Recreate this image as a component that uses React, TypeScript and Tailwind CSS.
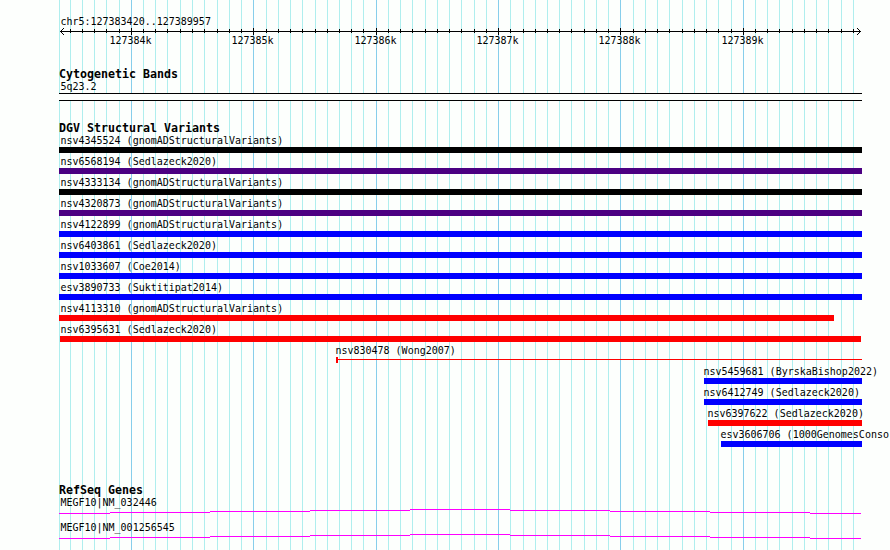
const MAJOR = [131, 253, 376, 498, 620, 743];
const MINOR = [
  59, 70, 82, 94, 106, 119, 143, 155, 167, 180, 192, 204, 217, 229, 241, 266, 278, 290, 302, 315, 327, 339, 351, 363,
  388, 400, 412, 425, 437, 449, 461, 474, 486, 510, 523, 535, 547, 559, 571, 584, 596, 608, 633, 645, 657, 669, 682,
  694, 706, 718, 731, 755, 767, 779, 792, 804, 816, 828, 841, 853,
];

const BLACK = "bg-black";
const INDIGO = "bg-[#4b0082]";
const BLUE = "bg-[#0000ff]";
const RED = "bg-[#ff0000]";

type Variant = { label: string; start: number; end: number; color: string; thin?: boolean };

const VARIANTS: Variant[] = [
  { label: "nsv4345524 (gnomADStructuralVariants)", start: 59, end: 862, color: BLACK },
  { label: "nsv6568194 (Sedlazeck2020)", start: 59, end: 862, color: INDIGO },
  { label: "nsv4333134 (gnomADStructuralVariants)", start: 59, end: 862, color: BLACK },
  { label: "nsv4320873 (gnomADStructuralVariants)", start: 59, end: 862, color: INDIGO },
  { label: "nsv4122899 (gnomADStructuralVariants)", start: 59, end: 862, color: BLUE },
  { label: "nsv6403861 (Sedlazeck2020)", start: 59, end: 862, color: BLUE },
  { label: "nsv1033607 (Coe2014)", start: 59, end: 862, color: BLUE },
  { label: "esv3890733 (Suktitipat2014)", start: 59, end: 862, color: BLUE },
  { label: "nsv4113310 (gnomADStructuralVariants)", start: 59, end: 834, color: RED },
  { label: "nsv6395631 (Sedlazeck2020)", start: 60, end: 861, color: RED },
  { label: "nsv830478 (Wong2007)", start: 336, end: 862, color: RED, thin: true },
  { label: "nsv5459681 (ByrskaBishop2022)", start: 704, end: 862, color: BLUE },
  { label: "nsv6412749 (Sedlazeck2020)", start: 704, end: 862, color: BLUE },
  { label: "nsv6397622 (Sedlazeck2020)", start: 708, end: 862, color: RED },
  { label: "esv3606706 (1000GenomesConsor", start: 721, end: 862, color: BLUE },
];

function Grid() {
  return (
    <svg className="absolute inset-0" width="890" height="550" shapeRendering="crispEdges" aria-hidden="true">
      {MINOR.map((x) => (
        <rect key={x} x={x} y={0} width={1} height={550} fill="#afeeee" />
      ))}
      {MAJOR.map((x) => (
        <rect key={x} x={x} y={0} width={1} height={550} fill="#87ceeb" />
      ))}
    </svg>
  );
}

function Label({ children }: { children: string }) {
  return (
    <div className="h-[15px] origin-[0_12px] scale-y-[1.1] pl-[1.4px] text-[10px] leading-[17px] whitespace-pre">
      {children}
    </div>
  );
}

function Title({ children }: { children: string }) {
  return (
    <h2 className="h-3 text-[11.63px] leading-[12px] font-bold whitespace-pre">{children}</h2>
  );
}

function Ruler() {
  return (
    <svg className="block h-[9px] w-[890px]" viewBox="0 0 890 9" shapeRendering="crispEdges" aria-hidden="true">
      <rect x="60" y="4" width="801" height="1" />
      {MINOR.slice(1).map((x) => (
        <rect key={x} x={x} y={2} width={1} height={4} />
      ))}
      {MAJOR.map((x) => (
        <rect key={x} x={x} y={1} width={1} height={7} />
      ))}
      {[1, 2, 3].map((d) => (
        <g key={d}>
          <rect x={60 + d} y={4 - d} width={1} height={1} />
          <rect x={60 + d} y={4 + d} width={1} height={1} />
          <rect x={860 - d} y={4 - d} width={1} height={1} />
          <rect x={860 - d} y={4 + d} width={1} height={1} />
        </g>
      ))}
    </svg>
  );
}

function VariantRow({ label, start, end, color, thin }: Variant) {
  const labelStart = start < 61 ? 59 : start - 2;
  return (
    <div className="h-[21px]">
      <div style={{ marginLeft: labelStart }}>
        <Label>{label}</Label>
      </div>
      {thin ? (
        <div className="flex h-[6px]" style={{ marginLeft: start, width: end - start }}>
          <div className={`h-[6px] w-[2px] ${color}`} />
          <div className={`mt-[2px] h-px grow ${color}`} />
        </div>
      ) : (
        <div className={`h-[6px] ${color}`} style={{ marginLeft: start, width: end - start }} />
      )}
    </div>
  );
}

function Gene({ name }: { name: string }) {
  return (
    <div className="h-[25px] pl-[59px]">
      <Label>{name}</Label>
      <svg className="block" width="802" height="10" shapeRendering="crispEdges" aria-hidden="true">
        {[4, 3, 2, 1, 0, 1, 2, 3, 4].map((y, i) => {
          const x = i === 0 ? 0 : i * 100 - 49;
          const width = i === 0 || i === 8 ? 51 : 100;
          return <rect key={i} x={x} y={y} width={width} height={1} fill="#ff00ff" />;
        })}
      </svg>
    </div>
  );
}

export default function App() {
  return (
    <main className="relative h-[550px] w-[890px] overflow-hidden bg-[#fdfffd] font-['DejaVu_Sans_Mono',monospace] text-black">
      <Grid />
      <div className="relative">
        <header className="pt-[13px]">
          <div className="h-[14px] pl-[59px]">
            <Label>chr5:127383420..127389957</Label>
          </div>
          <Ruler />
          <div className="-mt-1 flex pl-[108px]">
            {MAJOR.map((x, i) => (
              <div key={x} style={{ width: i < 5 ? MAJOR[i + 1] - x : 60 }}>
                <Label>{`12738${4 + i}k`}</Label>
              </div>
            ))}
          </div>
        </header>

        <section className="pt-[21px]">
          <div className="pl-[59px]">
            <Title>Cytogenetic Bands</Title>
          </div>
          <div className="-mt-[2px] pl-[59px]">
            <Label>5q23.2</Label>
          </div>
          <div className="ml-[59px] h-2 w-[803px] border-y border-black bg-[#fdfffd]" />
        </section>

        <section className="pt-[21px]">
          <div className="pl-[59px]">
            <Title>DGV Structural Variants</Title>
          </div>
          <div className="-mt-[2px]">
            {VARIANTS.map((v) => (
              <VariantRow key={v.label} {...v} />
            ))}
          </div>
        </section>

        <section className="pt-[37px]">
          <div className="pl-[59px]">
            <Title>RefSeq Genes</Title>
          </div>
          <div className="-mt-[2px]">
            <Gene name="MEGF10|NM_032446" />
            <Gene name="MEGF10|NM_001256545" />
          </div>
        </section>
      </div>
    </main>
  );
}
